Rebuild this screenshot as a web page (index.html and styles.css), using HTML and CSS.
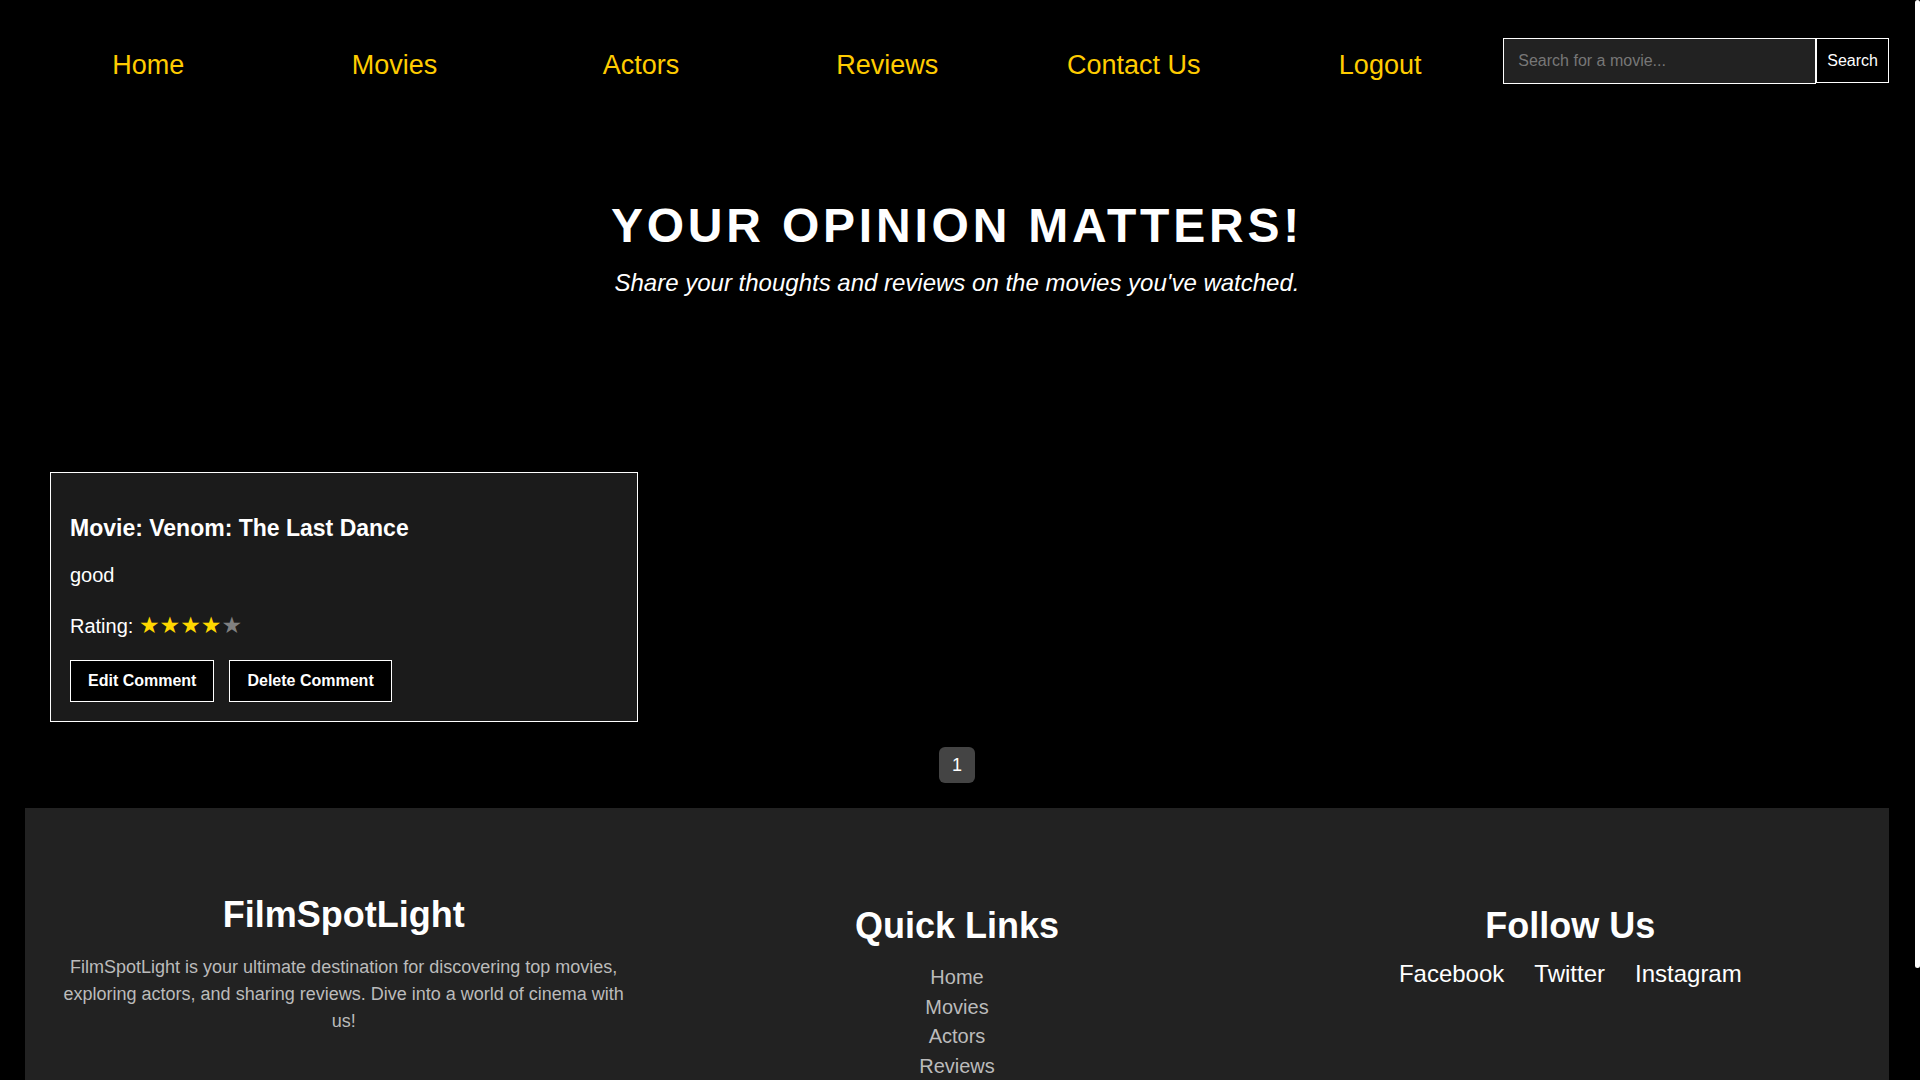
FILE: index.html
```html
<!DOCTYPE html>
<html lang="en">
<head>
<meta charset="UTF-8">
<title>FilmSpotLight - Reviews</title>
<link rel="stylesheet" href="styles.css">
</head>
<body>
<div class="scroll-thumb" aria-hidden="true"></div>
<header class="site-header">
  <nav class="main-nav">
    <ul class="nav-list">
      <li><a class="nav-link" href="#">Home</a></li>
      <li><a class="nav-link" href="#">Movies</a></li>
      <li><a class="nav-link" href="#">Actors</a></li>
      <li><a class="nav-link" href="#">Reviews</a></li>
      <li><a class="nav-link" href="#">Contact Us</a></li>
      <li><a class="nav-link" href="#">Logout</a></li>
    </ul>
  </nav>
  <form class="search-form">
    <input class="search-input" type="text" placeholder="Search for a movie...">
    <button class="search-btn" type="button">Search</button>
  </form>
</header>

<section class="hero">
  <h1 class="hero-title">YOUR OPINION MATTERS!</h1>
  <p class="hero-sub">Share your thoughts and reviews on the movies you've watched.</p>
</section>

<section class="reviews">
  <div class="review-grid">
    <article class="review-card">
      <h3 class="review-title">Movie: Venom: The Last Dance</h3>
      <p class="comment-text">good</p>
      <p class="rating">Rating: <span class="stars"><span class="star-on">★★★★</span><span class="star-off">★</span></span></p>
      <div class="actions">
        <button class="btn" type="button">Edit Comment</button>
        <button class="btn" type="button">Delete Comment</button>
      </div>
    </article>
  </div>
</section>

<div class="pagination">
  <span class="page-num">1</span>
</div>

<footer class="site-footer">
  <div class="footer-col">
    <h2 class="footer-brand">FilmSpotLight</h2>
    <p class="footer-desc">FilmSpotLight is your ultimate destination for discovering top movies, exploring actors, and sharing reviews. Dive into a world of cinema with us!</p>
  </div>
  <div class="footer-col">
    <h3 class="footer-heading">Quick Links</h3>
    <ul class="quick-links">
      <li><a href="#">Home</a></li>
      <li><a href="#">Movies</a></li>
      <li><a href="#">Actors</a></li>
      <li><a href="#">Reviews</a></li>
      <li><a href="#">Contact Us</a></li>
    </ul>
  </div>
  <div class="footer-col">
    <h3 class="footer-heading">Follow Us</h3>
    <div class="social">
      <a href="#">Facebook</a>
      <a href="#">Twitter</a>
      <a href="#">Instagram</a>
    </div>
  </div>
</footer>
</body>
</html>
```

FILE: styles.css
```css
html {
  background: #000;
}

body {
  margin: 0;
  padding: 0 31px 25px 25px;
  background: #000;
  color: #fff;
  font-family: "Liberation Sans", Arial, sans-serif;
}

/* Page scrollbar thumb (drawn over the page edge) */
.scroll-thumb {
  position: fixed;
  top: 0;
  right: 0;
  width: 5px;
  height: 968px;
  background: #fff;
  border-radius: 3px;
}

/* Header */
.site-header {
  display: flex;
  align-items: flex-start;
  padding-top: 38px;
}

.main-nav {
  flex: 1;
  padding-top: 12px;
}

.nav-list {
  display: flex;
  list-style: none;
  margin: 0;
  padding: 0;
}

.nav-list li {
  flex: 1;
  text-align: center;
}

.nav-link {
  color: #ffcc00;
  font-size: 27px;
  line-height: 31px;
  text-decoration: none;
}

.search-form {
  display: flex;
  align-items: flex-start;
}

.search-input {
  box-sizing: border-box;
  width: 313px;
  height: 46px;
  margin: 0;
  padding: 0 14px;
  background: #222;
  border: 1px solid #fff;
  color: #fff;
  font-family: "Liberation Sans", Arial, sans-serif;
  font-size: 16px;
  outline: none;
}

.search-input::placeholder {
  color: #777;
}

.search-btn {
  box-sizing: border-box;
  height: 45px;
  margin: 0;
  padding: 0 10px;
  background: #000;
  color: #fff;
  border: 1px solid #fff;
  font-family: "Liberation Sans", Arial, sans-serif;
  font-size: 16px;
}

/* Hero */
.hero {
  text-align: center;
  padding: 114px 0 150px;
}

.hero-title {
  margin: 0;
  font-size: 48px;
  line-height: 55px;
  font-weight: bold;
  letter-spacing: 3.8px;
}

.hero-sub {
  margin: 16px 0 0;
  font-size: 24px;
  line-height: 28px;
  font-style: italic;
}

/* Reviews */
.reviews {
  padding: 25px;
}

.review-grid {
  display: grid;
  grid-template-columns: repeat(3, 1fr);
  gap: 25px;
}

.review-card {
  background: #1b1b1b;
  border: 1px solid #fff;
  padding: 20px 20px 19px 19px;
}

.review-title {
  margin: 22px 0 23px;
  font-size: 23px;
  line-height: 26px;
  font-weight: bold;
}

.comment-text {
  margin: 0 0 27px;
  font-size: 20px;
  line-height: 23px;
}

.rating {
  margin: 0 0 22px;
  font-size: 20px;
  line-height: 23px;
}

.stars {
  font-family: "DejaVu Sans", sans-serif;
  font-size: 23px;
}

.star-on {
  color: #ffd700;
}

.star-off {
  color: #808080;
}

.actions {
  display: flex;
  gap: 15px;
}

.btn {
  margin: 0;
  padding: 11px 17px;
  background: #000;
  color: #fff;
  border: 1px solid #fff;
  font-family: "Liberation Sans", Arial, sans-serif;
  font-size: 16px;
  font-weight: bold;
  line-height: 18px;
}

/* Pagination */
.pagination {
  display: flex;
  justify-content: center;
  padding-bottom: 25px;
}

.page-num {
  display: flex;
  align-items: center;
  justify-content: center;
  width: 36px;
  height: 36px;
  background: #444;
  border-radius: 6px;
  font-size: 18px;
  color: #fff;
}

/* Footer */
.site-footer {
  display: flex;
  background: #222;
  padding: 40px 12px 70px;
}

.footer-col {
  flex: 1;
  padding: 0 20px;
  text-align: center;
}

.footer-brand {
  margin: 46px 0 19px;
  font-size: 36px;
  line-height: 41px;
  font-weight: bold;
}

.footer-desc {
  margin: 0;
  font-size: 18px;
  line-height: 27px;
  color: #bbb;
}

.footer-heading {
  margin: 57px 0 17px;
  font-size: 36px;
  line-height: 41px;
  font-weight: bold;
}

.quick-links {
  list-style: none;
  margin: 0;
  padding: 0;
}

.quick-links li {
  font-size: 20px;
  line-height: 29.5px;
}

.quick-links a {
  color: #bbb;
  text-decoration: none;
}

.social {
  display: flex;
  justify-content: center;
  gap: 30px;
  line-height: 22px;
}

.social a {
  color: #fff;
  font-size: 24px;
  text-decoration: none;
}
```
